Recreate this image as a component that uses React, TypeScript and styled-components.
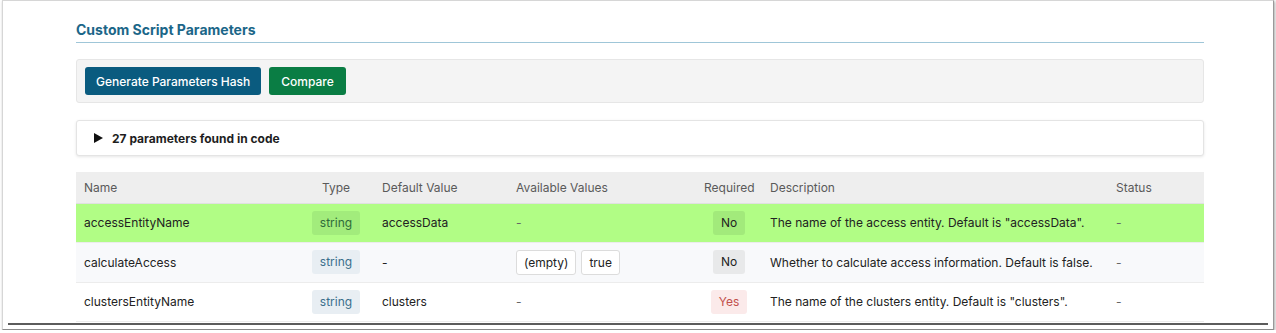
import React from 'react';
import styled, { createGlobalStyle } from 'styled-components';

const GlobalStyle = createGlobalStyle`
  html, body {
    margin: 0;
    padding: 0;
    background: #ffffff;
    font-family: Inter, "Noto Sans", Arial, sans-serif;
    color: #222;
  }
  * { box-sizing: border-box; }
`;

const Frame = styled.div`
  margin: 0 2px;
  height: 330px;
  background: #fff;
  border: 1px solid #d6d6d6;
  border-right-color: #9a9a9a;
  border-bottom-color: #8a8a8a;
  box-shadow: 1px 1px 3px rgba(0, 0, 0, 0.35);
  display: flex;
  flex-direction: column;
  overflow: hidden;
`;

const Viewport = styled.div`
  flex: 1;
  overflow: hidden;
  padding: 19px 0 0 73px;
`;

const BottomRule = styled.div`
  height: 2px;
  margin: 0 5px 4px;
  background: #5c5c5c;
`;

const Section = styled.section`
  width: 1128px;
`;

const Title = styled.h2`
  margin: 0;
  font-size: 14px;
  font-weight: 700;
  line-height: 20px;
  padding-bottom: 2px;
  color: #1b6688;
  border-bottom: 1px solid #9fc6d8;
`;

const Toolbar = styled.div`
  margin-top: 16px;
  height: 44px;
  padding: 7px 8px;
  background: #f4f4f4;
  border: 1px solid #e6e6e6;
  border-radius: 3px;
  display: flex;
  gap: 8px;
`;

const Button = styled.button<{ $tone: 'primary' | 'success' }>`
  height: 28px;
  padding: 0 ${p => (p.$tone === 'primary' ? 11 : 12)}px;
  border: none;
  border-radius: 3px;
  font-family: inherit;
  font-size: 12px;
  font-weight: 500;
  color: #fff;
  background: ${p => (p.$tone === 'primary' ? '#0a5b7f' : '#0a7d44')};
  cursor: pointer;
`;

const Details = styled.div`
  margin-top: 17px;
  height: 36px;
  padding: 0 17px;
  display: flex;
  align-items: center;
  gap: 9px;
  background: #fff;
  border: 1px solid #e4e4e4;
  border-radius: 3px;
  box-shadow: 0 1px 3px rgba(0, 0, 0, 0.1);
  font-size: 12px;
  font-weight: 700;
  color: #1e1e1e;
`;

const Triangle = styled.span`
  width: 0;
  height: 0;
  border-top: 5px solid transparent;
  border-bottom: 5px solid transparent;
  border-left: 9px solid #111;
`;

const Table = styled.table`
  margin-top: 16px;
  width: 1128px;
  table-layout: fixed;
  border-collapse: collapse;
  font-size: 12px;
`;

const Th = styled.th<{ $center?: boolean }>`
  height: 31px;
  padding: 0 8px;
  background: #eeeeee;
  border-bottom: 1px solid #e0e0e0;
  color: #5a5a5a;
  font-weight: 400;
  text-align: ${p => (p.$center ? 'center' : 'left')};
`;

const Row = styled.tr<{ $bg: string }>`
  background: ${p => p.$bg};
  border-bottom: 1px solid #ececec;
`;

const Td = styled.td<{ $center?: boolean; $muted?: boolean }>`
  height: 39.5px;
  padding: 0 8px;
  color: ${p => (p.$muted ? '#666' : '#222')};
  text-align: ${p => (p.$center ? 'center' : 'left')};
  white-space: nowrap;
`;

const Badge = styled.span<{ $bg: string; $fg: string }>`
  display: inline-block;
  height: 24px;
  line-height: 24px;
  padding: 0 8px;
  border-radius: 3px;
  background: ${p => p.$bg};
  color: ${p => p.$fg};
`;

const Chips = styled.div`
  display: flex;
  gap: 5px;
`;

const Chip = styled.span`
  height: 25px;
  line-height: 23px;
  padding: 0 7px;
  border: 1px solid #dcdcdc;
  border-radius: 3px;
  background: #fff;
  color: #222;
`;

type Param = {
  name: string;
  def: string;
  values: string[];
  required: boolean;
  description: string;
  highlight?: boolean;
};

const params: Param[] = [
  {
    name: 'accessEntityName',
    def: 'accessData',
    values: [],
    required: false,
    description: 'The name of the access entity. Default is "accessData".',
    highlight: true,
  },
  {
    name: 'calculateAccess',
    def: '-',
    values: ['(empty)', 'true'],
    required: false,
    description: 'Whether to calculate access information. Default is false.',
  },
  {
    name: 'clustersEntityName',
    def: 'clusters',
    values: [],
    required: true,
    description: 'The name of the clusters entity. Default is "clusters".',
  },
];

const App: React.FC = () => {
  return (
    <>
      <GlobalStyle />
      <Frame>
        <Viewport>
          <Section>
            <Title>Custom Script Parameters</Title>
            <Toolbar>
              <Button $tone="primary">Generate Parameters Hash</Button>
              <Button $tone="success">Compare</Button>
            </Toolbar>
            <Details>
              <Triangle />
              <span>27 parameters found in code</span>
            </Details>
            <Table>
              <colgroup>
                <col style={{ width: 222 }} />
                <col style={{ width: 76 }} />
                <col style={{ width: 134 }} />
                <col style={{ width: 188 }} />
                <col style={{ width: 66 }} />
                <col style={{ width: 346 }} />
                <col style={{ width: 96 }} />
              </colgroup>
              <thead>
                <tr>
                  <Th>Name</Th>
                  <Th $center>Type</Th>
                  <Th>Default Value</Th>
                  <Th>Available Values</Th>
                  <Th $center>Required</Th>
                  <Th>Description</Th>
                  <Th>Status</Th>
                </tr>
              </thead>
              <tbody>
                {params.map((p, i) => {
                  const bg = p.highlight ? '#b1fd85' : i % 2 === 1 ? '#f8f9fb' : '#ffffff';
                  return (
                    <Row key={p.name} $bg={bg}>
                      <Td>{p.name}</Td>
                      <Td $center>
                        <Badge
                          $bg={p.highlight ? '#a2ec7c' : '#e8eef3'}
                          $fg={p.highlight ? '#2f6b3a' : '#3b6f8c'}
                        >
                          string
                        </Badge>
                      </Td>
                      <Td>{p.def}</Td>
                      <Td $muted={p.values.length === 0}>
                        {p.values.length ? (
                          <Chips>
                            {p.values.map(v => (
                              <Chip key={v}>{v}</Chip>
                            ))}
                          </Chips>
                        ) : (
                          '-'
                        )}
                      </Td>
                      <Td $center>
                        {p.required ? (
                          <Badge $bg="#fbeaea" $fg="#c2504c">Yes</Badge>
                        ) : (
                          <Badge $bg={p.highlight ? '#a2ea7b' : '#e8e9ea'} $fg="#222">
                            No
                          </Badge>
                        )}
                      </Td>
                      <Td>{p.description}</Td>
                      <Td $muted>-</Td>
                    </Row>
                  );
                })}
              </tbody>
            </Table>
          </Section>
        </Viewport>
        <BottomRule />
      </Frame>
    </>
  );
};

export default App;
